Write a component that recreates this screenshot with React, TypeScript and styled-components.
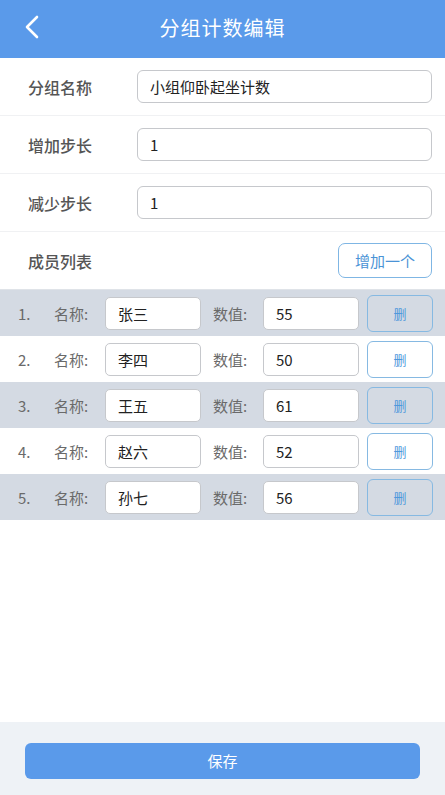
import React from 'react'
import styled, { createGlobalStyle } from 'styled-components'

const GlobalStyle = createGlobalStyle`
  html, body {
    margin: 0;
    padding: 0;
    background: #ffffff;
    font-family: "Noto Sans CJK SC", "Noto Sans", Roboto, sans-serif;
  }
  * {
    box-sizing: border-box;
  }
`

const Screen = styled.div`
  width: 445px;
  height: 795px;
  display: flex;
  flex-direction: column;
  background: #ffffff;
  overflow: hidden;
`

const Header = styled.div`
  height: 58px;
  flex-shrink: 0;
  background: #5a9aea;
  display: flex;
  align-items: center;
  justify-content: center;
  position: relative;
`

const BackButton = styled.button`
  position: absolute;
  left: 18px;
  top: 13px;
  width: 28px;
  height: 28px;
  padding: 0;
  border: none;
  background: transparent;
  display: flex;
  align-items: center;
  justify-content: center;
`

const Title = styled.div`
  color: #ffffff;
  font-size: 20px;
  letter-spacing: 1px;
  margin-top: -3px;
`

const Content = styled.div`
  flex: 1;
  display: flex;
  flex-direction: column;
`

const FieldRow = styled.div`
  height: 58px;
  display: flex;
  align-items: center;
  padding: 0 13px 0 28px;
  border-bottom: 1px solid #f0f1f3;
`

const FieldLabel = styled.div`
  width: 109px;
  flex-shrink: 0;
  font-size: 16px;
  color: #555555;
  font-weight: 500;
`

const TextBox = styled.div`
  flex: 1;
  height: 33px;
  border: 1px solid #c6c8cc;
  border-radius: 6px;
  display: flex;
  align-items: center;
  padding: 0 12px;
  font-size: 15px;
  color: #222222;
  background: #ffffff;
`

const ListHeader = styled(FieldRow)`
  justify-content: space-between;
  border-bottom: 1px solid #dfe3e8;
`

const AddButton = styled.button`
  width: 94px;
  height: 35px;
  border: 1px solid #7fb6e4;
  border-radius: 7px;
  background: #ffffff;
  color: #4a93d6;
  font-family: inherit;
  font-size: 15px;
  padding: 0;
`

const MemberRow = styled.div<{ $shaded: boolean }>`
  height: 46px;
  display: flex;
  align-items: center;
  padding: 0 12px 0 18px;
  background: ${({ $shaded }) => ($shaded ? '#d4dae3' : '#ffffff')};
`

const Index = styled.div`
  width: 36px;
  font-size: 15px;
  color: #6a6a6a;
`

const SmallLabel = styled.div<{ $w: number; $gap?: number }>`
  width: ${({ $w }) => $w}px;
  margin-left: ${({ $gap }) => $gap ?? 0}px;
  font-size: 15px;
  color: #6a6a6a;
`

const CellBox = styled.div`
  width: 96px;
  height: 33px;
  border: 1px solid #c6c8cc;
  border-radius: 5px;
  background: #ffffff;
  display: flex;
  align-items: center;
  padding: 0 12px;
  font-size: 15px;
  color: #222222;
`

const DeleteButton = styled.button`
  margin-left: 8px;
  width: 66px;
  height: 37px;
  border: 1px solid #86b9e2;
  border-radius: 6px;
  background: transparent;
  color: #4f98dc;
  font-family: inherit;
  font-size: 13px;
  padding: 0;
`

const Footer = styled.div`
  height: 73px;
  flex-shrink: 0;
  background: #eef2f6;
  display: flex;
  align-items: center;
  justify-content: center;
  padding: 0 25px;
`

const SaveButton = styled.button`
  width: 100%;
  height: 36px;
  margin-top: 4px;
  border: none;
  border-radius: 6px;
  background: #5a9aea;
  color: #ffffff;
  font-family: inherit;
  font-size: 15px;
`

const fields = [
  { label: '分组名称', value: '小组仰卧起坐计数' },
  { label: '增加步长', value: '1' },
  { label: '减少步长', value: '1' },
]

const members = [
  { name: '张三', value: '55' },
  { name: '李四', value: '50' },
  { name: '王五', value: '61' },
  { name: '赵六', value: '52' },
  { name: '孙七', value: '56' },
]

const App: React.FC = () => {
  return (
    <Screen>
      <GlobalStyle />
      <Header>
        <BackButton>
          <svg width="16" height="24" viewBox="0 0 16 24" fill="none">
            <path d="M13 2 L3 12 L13 22" stroke="#ffffff" strokeWidth="2.6" strokeLinecap="round" strokeLinejoin="round" />
          </svg>
        </BackButton>
        <Title>分组计数编辑</Title>
      </Header>
      <Content>
        {fields.map((f) => (
          <FieldRow key={f.label}>
            <FieldLabel>{f.label}</FieldLabel>
            <TextBox>{f.value}</TextBox>
          </FieldRow>
        ))}
        <ListHeader>
          <FieldLabel>成员列表</FieldLabel>
          <AddButton>增加一个</AddButton>
        </ListHeader>
        {members.map((m, i) => (
          <MemberRow key={m.name} $shaded={i % 2 === 0}>
            <Index>{i + 1}.</Index>
            <SmallLabel $w={51}>名称:</SmallLabel>
            <CellBox>{m.name}</CellBox>
            <SmallLabel $w={50} $gap={12}>数值:</SmallLabel>
            <CellBox>{m.value}</CellBox>
            <DeleteButton>删</DeleteButton>
          </MemberRow>
        ))}
      </Content>
      <Footer>
        <SaveButton>保存</SaveButton>
      </Footer>
    </Screen>
  )
}

export default App
